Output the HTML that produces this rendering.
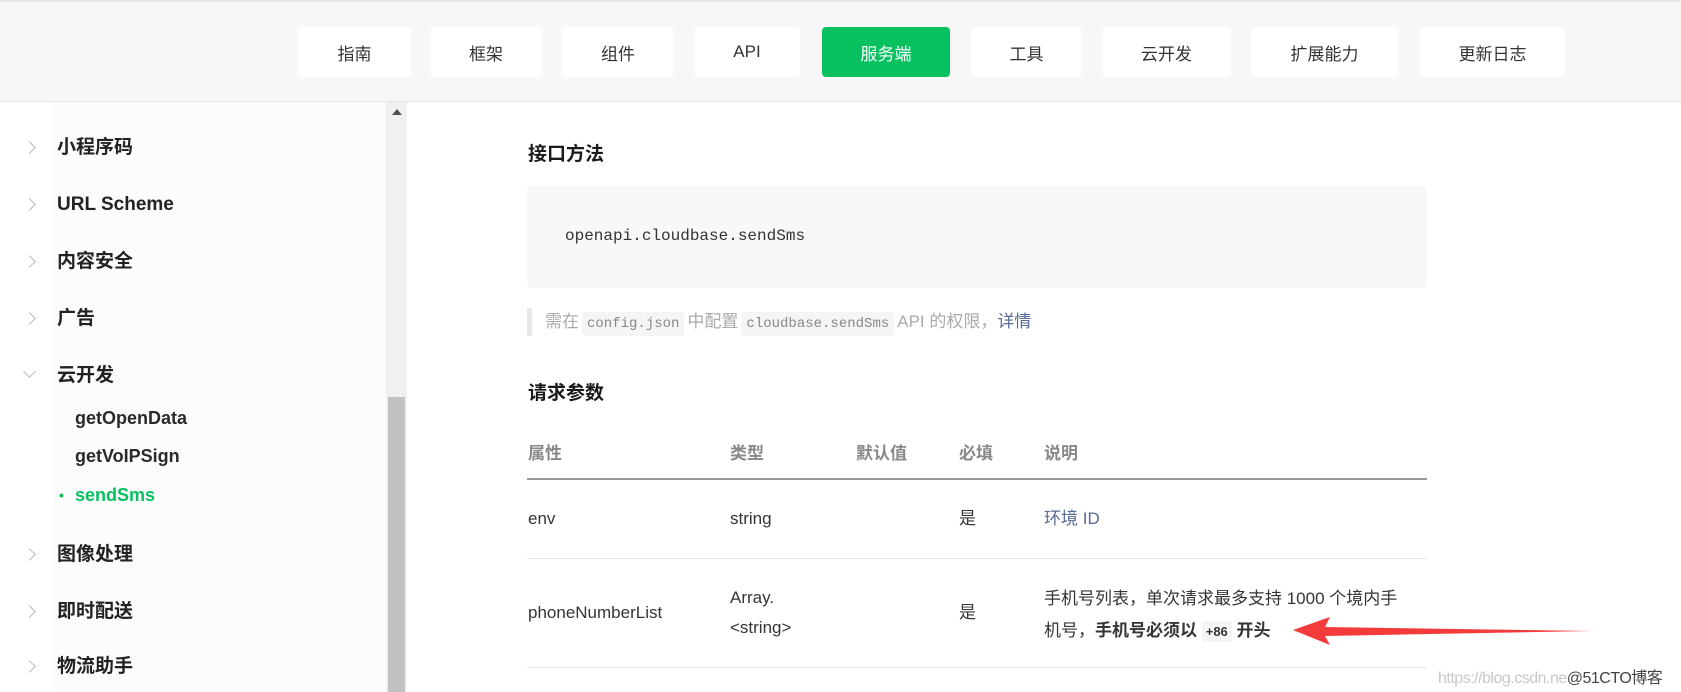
<!DOCTYPE html>
<html><head><meta charset="utf-8"><style>
*{margin:0;padding:0;box-sizing:border-box}
body{width:1681px;height:692px;overflow:hidden;background:#fff;font-family:"Liberation Sans","Noto Sans CJK SC",sans-serif;color:#353535;position:relative}
.hdr{position:absolute;left:0;top:0;width:1681px;height:102px;background:#f7f7f7;border-top:2px solid #e8e8e8;border-bottom:1px solid #e6e6e6}
.btn{position:absolute;top:25px;height:50px;background:#fff;border-radius:4px;font-size:17px;color:#333;display:flex;align-items:center;justify-content:center}
.btn.on{background:#07c160;color:#fff}
.side{position:absolute;left:0;top:102px;width:386px;height:590px;background:#fff}
.side .bg{position:absolute;left:53px;top:0;width:333px;height:590px;background:#fcfcfc}
.it{position:absolute;left:57px;font-size:19px;font-weight:bold;color:#222;line-height:24px;transform:translateY(-12px)}
.sub{position:absolute;left:75px;font-size:18px;font-weight:bold;color:#2a2a2a;line-height:24px;transform:translateY(-12px)}
.chev{position:absolute;left:25px;width:9px;height:9px;border-right:1.5px solid #bbb;border-top:1.5px solid #bbb;transform:translateY(-5px) rotate(45deg)}
.track{position:absolute;left:386px;top:102px;width:21px;height:590px;background:#f0f0f0}
.thumb{position:absolute;left:388px;top:397px;width:17px;height:295px;background:#c1c1c1}
.arrow{position:absolute;left:392px;top:109px;width:0;height:0;border-left:5px solid transparent;border-right:5px solid transparent;border-bottom:6px solid #505050}
.h{position:absolute;left:528px;font-size:19px;font-weight:bold;color:#1a1a1a;line-height:24px;transform:translateY(-12px)}
.code{position:absolute;left:527px;top:186px;width:900px;height:102px;background:#f8f8f8;border-radius:4px}
.code span{position:absolute;left:38px;top:41px;font-family:"Liberation Mono",monospace;font-size:16px;color:#333}
.note{position:absolute;left:527px;top:308px;height:28px;border-left:5px solid #e8e8e8;padding-left:13px;font-size:17px;color:#aaa;line-height:28px;white-space:nowrap}
.note code{font-family:"Liberation Mono",monospace;font-size:14px;background:#f5f5f5;color:#888;padding:4px 5px;border-radius:3px;margin:0 3px}
.note a{color:#576b95}
.th{position:absolute;top:442px;font-size:17px;font-weight:bold;color:#888;line-height:24px}
.td{position:absolute;font-size:17px;color:#353535;line-height:30px}
.ln{position:absolute;left:527px;width:900px;height:1px;background:#e5e5e5}
</style></head><body>
<div class="hdr">
<div class="btn" style="left:298px;width:113px">指南</div>
<div class="btn" style="left:430px;width:112px">框架</div>
<div class="btn" style="left:562px;width:112px">组件</div>
<div class="btn" style="left:694px;width:106px">API</div>
<div class="btn on" style="left:822px;width:128px">服务端</div>
<div class="btn" style="left:971px;width:111px">工具</div>
<div class="btn" style="left:1102px;width:129px">云开发</div>
<div class="btn" style="left:1251px;width:147px">扩展能力</div>
<div class="btn" style="left:1420px;width:145px">更新日志</div>
</div>
<div class="side"><div class="bg"></div></div>
<div class="chev" style="top:148px"></div><div class="it" style="top:148px">小程序码</div>
<div class="chev" style="top:205px"></div><div class="it" style="top:205px">URL Scheme</div>
<div class="chev" style="top:262px"></div><div class="it" style="top:262px">内容安全</div>
<div class="chev" style="top:319px"></div><div class="it" style="top:319px">广告</div>
<div class="chev" style="top:372px;transform:translateY(-5px) rotate(135deg)"></div><div class="it" style="top:376px">云开发</div>
<div class="sub" style="top:418px">getOpenData</div>
<div class="sub" style="top:456px">getVoIPSign</div>
<div class="sub" style="top:495px;color:#07c160"><span style="position:absolute;left:-16px;font-size:14px">•</span>sendSms</div>
<div class="chev" style="top:555px"></div><div class="it" style="top:555px">图像处理</div>
<div class="chev" style="top:612px"></div><div class="it" style="top:612px">即时配送</div>
<div class="chev" style="top:667px"></div><div class="it" style="top:667px">物流助手</div>
<div class="track"></div><div class="thumb"></div><div class="arrow"></div>

<div class="h" style="top:155px">接口方法</div>
<div class="code"><span>openapi.cloudbase.sendSms</span></div>
<div class="note">需在<code>config.json</code>中配置<code>cloudbase.sendSms</code>API 的权限，<a>详情</a></div>
<div class="h" style="top:394px">请求参数</div>
<div class="th" style="left:528px">属性</div>
<div class="th" style="left:730px">类型</div>
<div class="th" style="left:856px">默认值</div>
<div class="th" style="left:959px">必填</div>
<div class="th" style="left:1044px">说明</div>
<div class="ln" style="top:478px;height:2px;background:#999"></div>
<div class="td" style="left:528px;top:504px">env</div>
<div class="td" style="left:730px;top:504px">string</div>
<div class="td" style="left:959px;top:504px">是</div>
<div class="td" style="left:1044px;top:504px;color:#576b95">环境 ID</div>
<div class="ln" style="top:558px"></div>
<div class="td" style="left:528px;top:598px">phoneNumberList</div>
<div class="td" style="left:730px;top:583px;line-height:30px">Array.<br>&lt;string&gt;</div>
<div class="td" style="left:959px;top:598px">是</div>
<div class="td" style="left:1044px;top:583px;line-height:32px;white-space:nowrap">手机号列表，单次请求最多支持 1000 个境内手<br>机号，<b>手机号必须以 <span style="font-size:13px;background:#f5f5f5;padding:3px 4px">+86</span> 开头</b></div>
<div class="ln" style="top:667px"></div>
<svg style="position:absolute;left:1285px;top:615px" width="315" height="34"><polygon points="8,15 45,2 40,12 306,16 40,21 45,30" fill="#f33b3b"/></svg>
<div style="position:absolute;left:1438px;top:664px;font-size:16px;letter-spacing:-0.5px;color:#c8c8c8;white-space:nowrap">https://blog.csdn.ne<span style="color:#444">@51CTO博客</span></div>
</body></html>
